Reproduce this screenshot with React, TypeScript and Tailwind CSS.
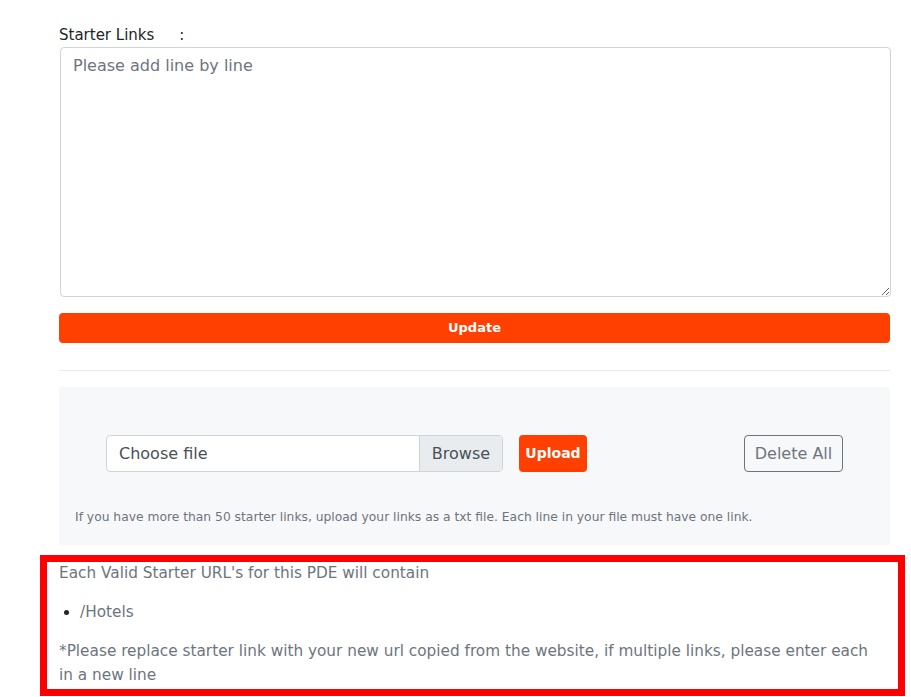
const font = { fontFamily: '"DejaVu Sans", "Open Sans", Arial, sans-serif' };

export default function App() {
  return (
    <div className="min-h-[697px] bg-white text-[#212529]" style={font}>
      <div className="ml-[59px] w-[831px] pt-[24px]">
        <label className="block text-[15px] leading-[22px] mb-px">
          Starter Links<span className="ml-[25px]">:</span>
        </label>
        <textarea
          className="block w-full h-[250px] ml-px rounded-[4px] border border-[#ced4da] px-[12px] py-[6px] text-[16px] leading-[24px] text-[#495057] placeholder:text-[#6c757d] outline-none resize-y"
          style={font}
          placeholder="Please add line by line"
        />
        <button className="mt-[16px] w-full h-[30px] rounded-[4px] bg-[#ff4000] text-white text-[13px] font-semibold">
          Update
        </button>
        <div className="mt-[27px] border-t border-[#e9ecef]" />
        <div className="mt-[16px] h-[158px] bg-[#f7f8fa] px-[16px] pt-[48px]">
          <div className="flex items-center pl-[31px]">
            <div className="flex h-[37px] w-[397px] rounded-[4px] border border-[#ced4da] bg-white overflow-hidden">
              <span className="flex-1 flex items-center px-[12px] text-[16px] text-[#495057]">Choose file</span>
              <span className="flex items-center w-[83px] justify-center border-l border-[#ced4da] bg-[#e9ecef] text-[16px] text-[#495057]">
                Browse
              </span>
            </div>
            <button className="ml-[16px] h-[37px] w-[68px] rounded-[4px] bg-[#ff4000] text-white text-[14px] font-semibold">
              Upload
            </button>
            <button className="ml-[157px] h-[37px] w-[99px] rounded-[4px] border border-[#6c757d] text-[16px] text-[#6c757d]">
              Delete All
            </button>
          </div>
          <p className="mt-[36px] text-[12.3px] leading-[18px] text-[#6c757d]">
            If you have more than 50 starter links, upload your links as a txt file. Each line in your file must have one link.
          </p>
        </div>
      </div>
      <div className="mt-[10px] ml-[40px] w-[865px] border-[7px] border-[#ff0000] pt-px pl-[12px] pr-[24px] pb-[2px] text-[15.3px]">
        <p className="leading-[21px] text-[#6c757d]">Each Valid Starter URL's for this PDE will contain</p>
        <ul className="mt-[16px] list-disc pl-[21px] leading-[24px]">
          <li>
            <span className="text-[#6c757d]">/Hotels</span>
          </li>
        </ul>
        <p className="mt-[15px] leading-[24px] text-[#6c757d]">
          *Please replace starter link with your new url copied from the website, if multiple links, please enter each in a new line
        </p>
      </div>
    </div>
  );
}
